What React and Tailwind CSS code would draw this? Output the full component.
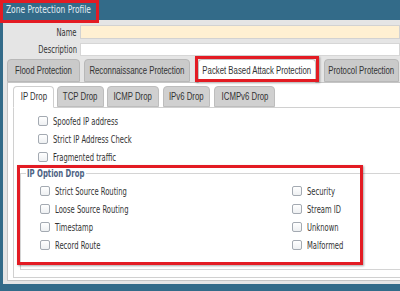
const outerTabs = [
  { label: 'Flood Protection', cls: 'ml-[4px] w-[73px]' },
  { label: 'Reconnaissance Protection', cls: 'ml-[4px] w-[106px]' },
  { label: 'Packet Based Attack Protection', cls: 'ml-[8px] w-[118px]', active: true },
  { label: 'Protocol Protection', cls: 'ml-[8px] w-[75px]' },
];

const innerTabs = [
  { label: 'IP Drop', cls: 'w-[41px]', active: true },
  { label: 'TCP Drop', cls: 'ml-[3px] w-[47px]' },
  { label: 'ICMP Drop', cls: 'ml-[3px] w-[52px]' },
  { label: 'IPv6 Drop', cls: 'ml-[4px] w-[47px]' },
  { label: 'ICMPv6 Drop', cls: 'ml-[4px] w-[61px]' },
];

function Text({ children }) {
  return (
    <span className="inline-block origin-left scale-x-[0.68] whitespace-nowrap font-['DejaVu_Sans',sans-serif] text-[10px] leading-[12px] text-[#333]">
      {children}
    </span>
  );
}

function TabText({ children }) {
  return (
    <span className="inline-block origin-center scale-x-[0.78] whitespace-nowrap font-['Liberation_Sans',Arial,sans-serif] text-[10px] leading-[12px] text-[#333]">
      {children}
    </span>
  );
}

function Check({ label }) {
  return (
    <div className="flex h-[18px] items-center text-[10px] leading-[12px]">
      <span className="h-[10px] w-[10px] shrink-0 rounded-[2px] border border-[#a4aab2] bg-linear-to-b from-white to-[#eef0f2]" />
      <span className="ml-[5px]">
        <Text>{label}</Text>
      </span>
    </div>
  );
}

export default function App() {
  return (
    <div className="relative h-[291px] w-[400px] overflow-hidden bg-[#336b89]">
      {/* title bar */}
      <div className="flex h-[20px] items-center pl-[6px]">
        <span className="inline-block origin-left scale-x-[0.68] whitespace-nowrap font-['DejaVu_Sans',sans-serif] text-[11px] text-[#e4edf3]">
          Zone Protection Profile
        </span>
      </div>

      <div className="ml-[3px] h-[264px] bg-[#e5e5e5] pt-[5px]">
        {/* name / description */}
        <div className="flex h-[14px] items-center">
          <div className="w-[74px] text-right text-[10px] leading-[12px]">
            <span className="inline-block origin-right scale-x-[0.68] whitespace-nowrap font-['DejaVu_Sans',sans-serif] text-[10px] text-[#333]">
              Name
            </span>
          </div>
          <div className="ml-[3px] h-[14px] flex-1 border border-[#d2d2d2] bg-[#fff0d2]" />
        </div>
        <div className="mt-[4px] flex h-[13px] items-center">
          <div className="w-[74px] text-right text-[10px] leading-[12px]">
            <span className="inline-block origin-right scale-x-[0.68] whitespace-nowrap font-['DejaVu_Sans',sans-serif] text-[10px] text-[#333]">
              Description
            </span>
          </div>
          <div className="ml-[3px] h-[13px] flex-1 border border-[#d6d6d6] bg-white" />
        </div>

        {/* first level tabs */}
        <div className="relative z-10 mt-[3px] flex h-[23px] items-start">
          {outerTabs.map((t) => (
            <div
              key={t.label}
              className={`flex shrink-0 items-center justify-center rounded-t-[4px] border ${t.cls} ${
                t.active
                  ? 'h-[24px] border-[#c2c2c2] border-b-white bg-white'
                  : 'h-[23px] border-[#b8b8b8] bg-[#cacaca]'
              }`}
            >
              <TabText>{t.label}</TabText>
            </div>
          ))}
        </div>

        {/* first level panel */}
        <div className="ml-[4px] h-[199px] w-[400px] border border-[#c5c5c5] bg-white pl-[5px] pt-[3px]">
          <div className="relative z-10 flex h-[21px] items-start">
            {innerTabs.map((t) => (
              <div
                key={t.label}
                className={`flex shrink-0 items-center justify-center rounded-t-[4px] border ${t.cls} ${
                  t.active
                    ? 'h-[22px] border-[#cfcfcf] border-b-white bg-white'
                    : 'h-[21px] border-[#bdbdbd] bg-[#d0d0d0]'
                }`}
              >
                <TabText>{t.label}</TabText>
              </div>
            ))}
          </div>

          <div className="h-[171px] w-[400px] border border-[#d0d0d0] bg-white pt-[4px]">
            <div className="pl-[24px]">
              <Check label="Spoofed IP address" />
              <Check label="Strict IP Address Check" />
              <Check label="Fragmented traffic" />
            </div>

            <fieldset className="ml-[6px] mt-[1px] w-[390px] border border-[#d4d4d4] pb-[15px] pl-[19px] pt-[2px]">
              <legend className="-ml-[14px] w-[60px] px-[1px] text-[10px] leading-[12px]">
                <span className="inline-block origin-left scale-x-[0.69] whitespace-nowrap font-['DejaVu_Sans',sans-serif] text-[10px] font-bold leading-[12px] text-[#4d6283]">
                  IP Option Drop
                </span>
              </legend>
              <div className="flex">
                <div className="w-[252px]">
                  <Check label="Strict Source Routing" />
                  <Check label="Loose Source Routing" />
                  <Check label="Timestamp" />
                  <Check label="Record Route" />
                </div>
                <div>
                  <Check label="Security" />
                  <Check label="Stream ID" />
                  <Check label="Unknown" />
                  <Check label="Malformed" />
                </div>
              </div>
            </fieldset>
          </div>
        </div>
      </div>

      {/* red highlight annotations */}
      <div className="absolute left-0 top-0 h-[23px] w-[99px] border-[3px] border-[#e31b23]" />
      <div className="absolute left-[195px] top-[56px] z-20 h-[26px] w-[124px] border-[3px] border-[#e31b23] shadow-[1px_1px_2px_rgba(0,0,0,0.35)]" />
      <div className="absolute left-[17px] top-[165px] h-[100px] w-[346px] border-[3px] border-[#e31b23] shadow-[1px_1px_2px_rgba(0,0,0,0.35)]" />
    </div>
  );
}
